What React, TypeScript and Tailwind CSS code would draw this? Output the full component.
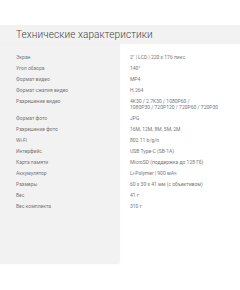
import React from "react";

const rows: [string, string[]][] = [
  ["Экран", ['2" | LCD | 220 x 176 пикс']],
  ["Угол обзора", ["140°"]],
  ["Формат видео", ["MP4"]],
  ["Формат сжатия видео", ["H.264"]],
  ["Разрешение видео", ["4K30 / 2.7K30 / 1080P60 /", "1080P30 / 720P120 / 720P60 / 720P30"]],
  ["Формат фото", ["JPG"]],
  ["Разрешение фото", ["16M, 12M, 8M, 5M, 2M"]],
  ["Wi-Fi", ["802.11 b/g/n"]],
  ["Интерфейс", ["USB Type-C (SB-1A)"]],
  ["Карта памяти", ["MicroSD (поддержка до 128 Гб)"]],
  ["Аккумулятор", ["Li-Polymer | 900 мАч"]],
  ["Размеры", ["60 x 30 x 41 мм (с объективом)"]],
  ["Вес", ["41 г"]],
  ["Вес комплекта", ["310 г"]],
];

export default function App() {
  return (
    <div
      className="w-[240px] h-[290px] bg-white pt-[25px] overflow-hidden"
      style={{ fontFamily: "Roboto, 'Noto Sans', sans-serif" }}
    >
      <div className="h-[19px] bg-[#f2f2f2] pl-4 flex items-center text-[10px] font-light text-[#444] tracking-[0.1px]">
        Технические характеристики
      </div>
      <div className="flex">
        <div className="w-[120px] bg-[#f2f2f2] rounded-br-[2px] shadow-[0_0_2px_rgba(0,0,0,0.04)] pt-[10px] pb-[55px] pl-4 flex flex-col gap-[5px] text-[5px] leading-[6px] text-[#777]">
          {rows.map(([l, v]) => (
            <div key={l} style={{ height: v.length * 6 }}>
              {l}
            </div>
          ))}
        </div>
        <div className="flex-1 pt-[10px] pl-[10px] flex flex-col gap-[5px] text-[5px] leading-[6px] text-[#777]">
          {rows.map(([l, v]) => (
            <div key={l}>
              {v.map((t) => (
                <div key={t} className="whitespace-nowrap">{t}</div>
              ))}
            </div>
          ))}
        </div>
      </div>
    </div>
  );
}
